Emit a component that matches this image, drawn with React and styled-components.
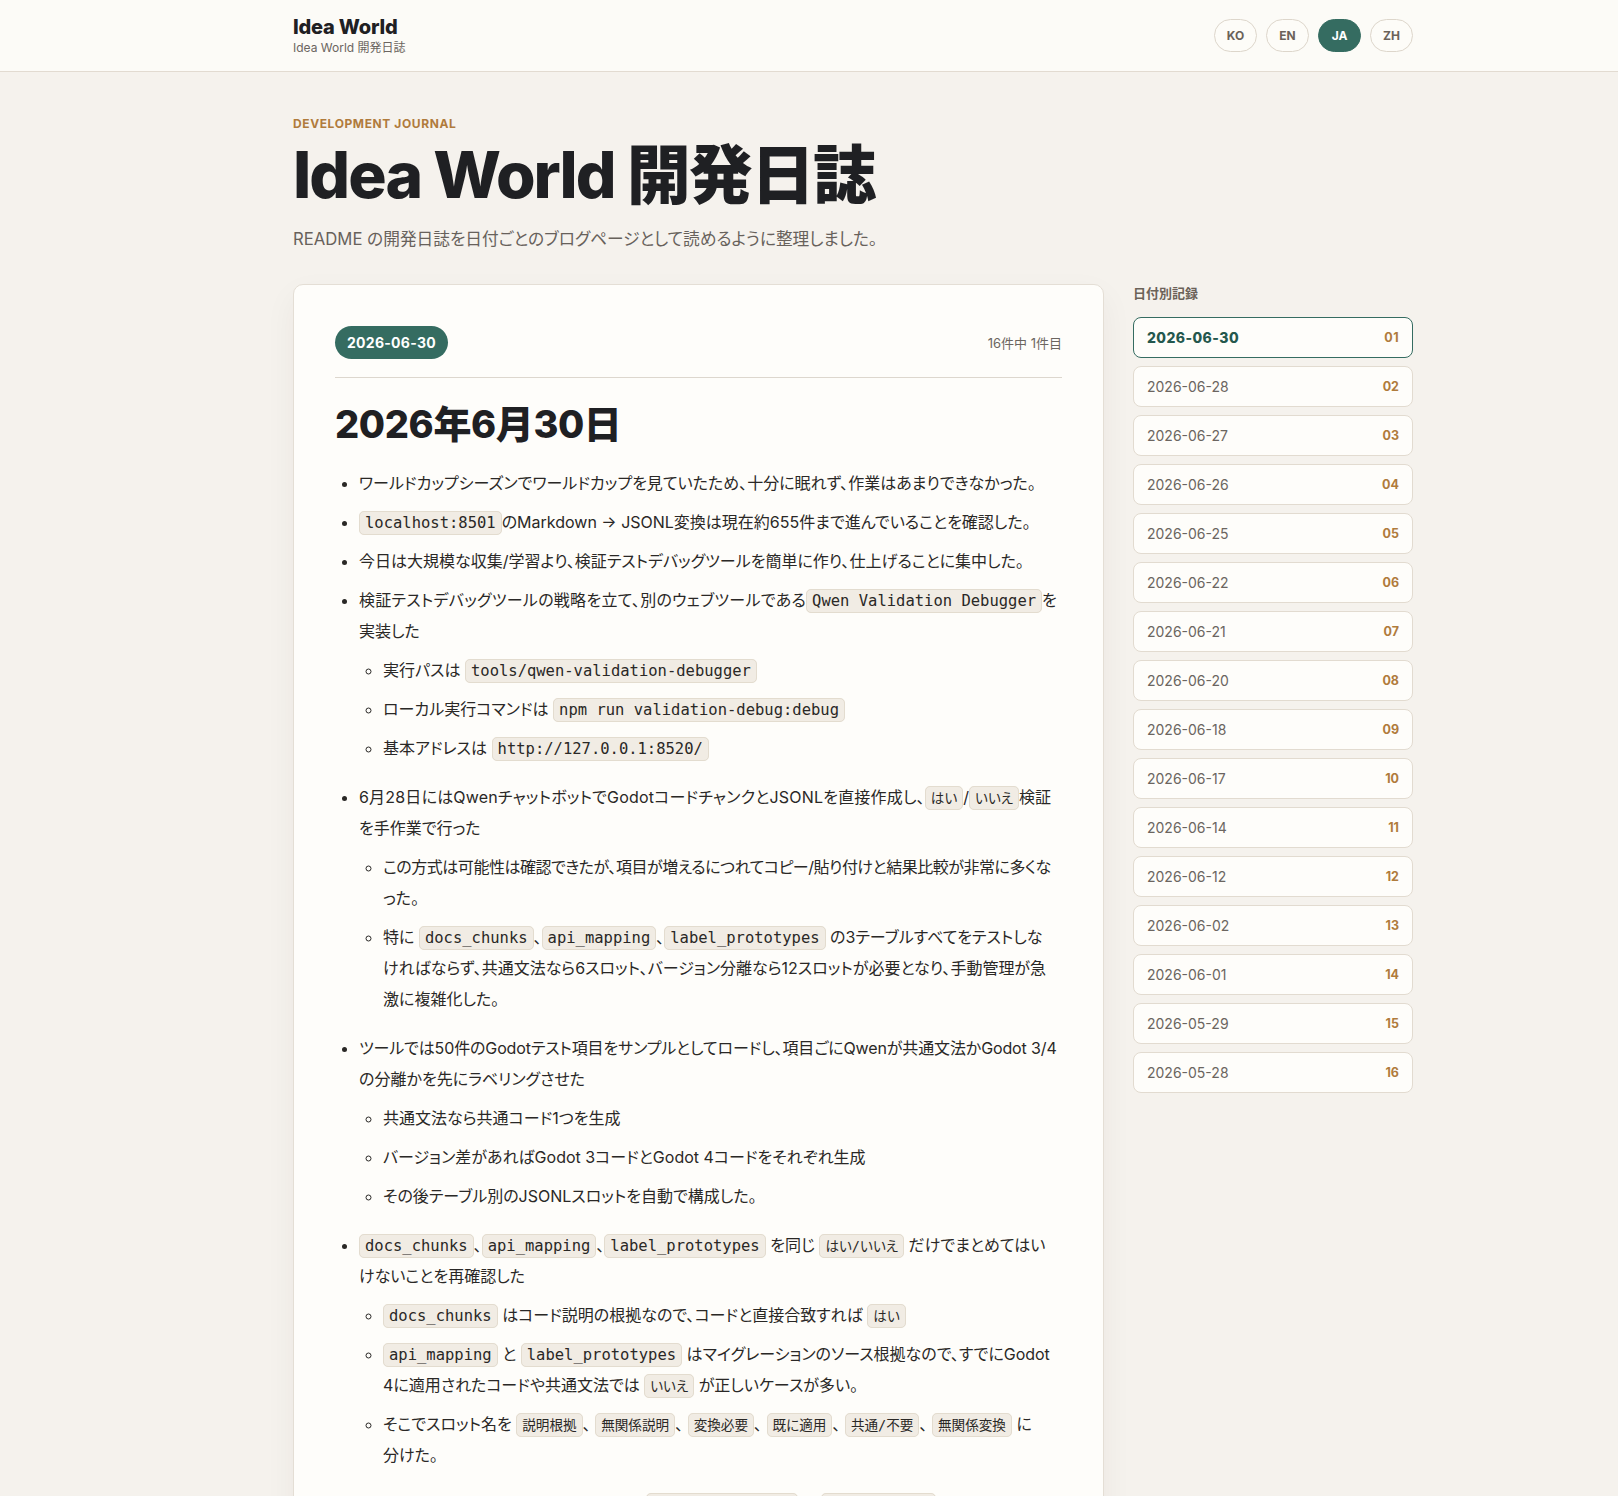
import React from "react";
import styled, { createGlobalStyle } from "styled-components";

const Global = createGlobalStyle`
  * { box-sizing: border-box; }
  html, body { margin: 0; padding: 0; }
  body {
    background: #f5f2ed;
    color: #2a2826;
    font-family: Inter, "Noto Sans CJK JP", sans-serif;
    font-feature-settings: "palt";
  }
`;

const Header = styled.header`
  background: #fcfbf7;
  border-bottom: 1px solid #e2dbd1;
  height: 72px;
`;

const Shell = styled.div`
  width: 1120px;
  margin-left: 293px;
`;

const HeaderInner = styled(Shell)`
  height: 100%;
  display: flex;
  align-items: center;
  justify-content: space-between;
`;

const Brand = styled.div`
  display: flex;
  flex-direction: column;
`;

const BrandTitle = styled.div`
  font-size: 20px;
  line-height: 24px;
  font-weight: 800;
  color: #1f2023;
  letter-spacing: -0.01em;
`;

const BrandSub = styled.div`
  font-size: 12px;
  line-height: 18px;
  color: #6b6560;
`;

const LangGroup = styled.nav`
  display: flex;
  gap: 9px;
`;

const LangPill = styled.button`
  width: 43px;
  height: 33px;
  border-radius: 999px;
  border: 1px solid ${(p) => (p.$active ? "#356c61" : "#ddd6cb")};
  background: ${(p) => (p.$active ? "#356c61" : "#fdfcf8")};
  color: ${(p) => (p.$active ? "#ffffff" : "#6b6259")};
  font-family: Inter, sans-serif;
  font-size: 12px;
  font-weight: 700;
  padding: 0;
  cursor: pointer;
`;

const Hero = styled(Shell)`
  padding-top: 44px;
`;

const Eyebrow = styled.div`
  font-size: 12px;
  line-height: 16px;
  font-weight: 700;
  letter-spacing: 0.05em;
  color: #b07b3c;
  text-transform: uppercase;
`;

const Title = styled.h1`
  margin: 8px 0 0;
  font-size: 64px;
  line-height: 70px;
  font-weight: 800;
  letter-spacing: -0.03em;
  color: #1f2023;
`;

const Lead = styled.p`
  margin: 16px 0 0;
  font-size: 16.7px;
  line-height: 27px;
  color: #67615b;
`;

const Layout = styled(Shell)`
  display: grid;
  grid-template-columns: 811px 280px;
  column-gap: 29px;
  align-items: start;
  margin-top: 31px;
`;

const Card = styled.article`
  background: #fefdfa;
  border: 1px solid #e4ded5;
  border-radius: 10px;
  box-shadow: 0 12px 32px rgba(60, 45, 30, 0.05);
  padding: 41px 41px 60px;
`;

const CardHead = styled.div`
  display: flex;
  align-items: center;
  justify-content: space-between;
  padding-bottom: 18px;
  border-bottom: 1px solid #ddd7ce;
`;

const DateBadge = styled.span`
  display: inline-flex;
  align-items: center;
  height: 33px;
  padding: 0 12px;
  border-radius: 999px;
  background: #356c61;
  color: #fff;
  font-size: 14px;
  font-weight: 700;
  letter-spacing: 0.02em;
`;

const Meta = styled.span`
  font-size: 13px;
  color: #6b6560;
`;

const DayTitle = styled.h2`
  margin: 23px 0 21px;
  font-size: 38px;
  line-height: 46px;
  font-weight: 800;
  letter-spacing: -0.01em;
  color: #1f2023;
`;

const List = styled.ul`
  margin: 0;
  padding-left: 24px;
  list-style: disc;
  font-size: 16px;
  line-height: 31px;
  color: #2a2826;
`;

const SubList = styled.ul`
  margin: 8px 0 18px;
  padding-left: 24px;
  list-style: circle;
`;

const Item = styled.li`
  margin: 0 0 8px;
  padding-left: 0;
`;

const Track = styled.span`
  letter-spacing: ${(p) => p.$ls || "0"};
`;

const Code = styled.code`
  font-family: "DejaVu Sans Mono", "Noto Sans CJK JP", monospace;
  font-size: ${(p) => (p.$ja ? "13.6px" : "15.5px")};
  line-height: 1;
  background: #f1ece4;
  border: 1px solid #e3dccf;
  border-radius: 5px;
  padding: ${(p) => (p.$ja ? "3px 5px" : "2px 5px")};
  color: #2a2826;
`;

const Sidebar = styled.aside`
  display: flex;
  flex-direction: column;
`;

const SideLabel = styled.div`
  font-size: 13px;
  line-height: 18px;
  font-weight: 700;
  color: #6b6259;
  margin-bottom: 15px;
`;

const DateList = styled.div`
  display: flex;
  flex-direction: column;
  gap: 8px;
`;

const DateLink = styled.a`
  display: flex;
  align-items: center;
  justify-content: space-between;
  height: 41px;
  padding: 0 13px;
  border-radius: 8px;
  background: #fefdfa;
  border: 1px solid ${(p) => (p.$active ? "#356c61" : "#e2dbd0")};
  color: ${(p) => (p.$active ? "#24574d" : "#6b6560")};
  font-size: 14px;
  font-weight: ${(p) => (p.$active ? 800 : 400)};
  letter-spacing: ${(p) => (p.$active ? "0.03em" : "0")};
  text-decoration: none;
`;

const DateNum = styled.span`
  font-size: 12.5px;
  font-weight: 700;
  color: #b07b3c;
`;

const dates = [
  "2026-06-30", "2026-06-28", "2026-06-27", "2026-06-26", "2026-06-25", "2026-06-22",
  "2026-06-21", "2026-06-20", "2026-06-18", "2026-06-17", "2026-06-14", "2026-06-12",
  "2026-06-02", "2026-06-01", "2026-05-29", "2026-05-28",
];

export default function App() {
  return (
    <>
      <Global />
      <Header>
        <HeaderInner>
          <Brand>
            <BrandTitle>Idea World</BrandTitle>
            <BrandSub>Idea World 開発日誌</BrandSub>
          </Brand>
          <LangGroup>
            {["KO", "EN", "JA", "ZH"].map((l) => (
              <LangPill key={l} $active={l === "JA"}>{l}</LangPill>
            ))}
          </LangGroup>
        </HeaderInner>
      </Header>

      <Hero>
        <Eyebrow>Development Journal</Eyebrow>
        <Title>Idea World 開発日誌</Title>
        <Lead>README の開発日誌を日付ごとのブログページとして読めるように整理しました。</Lead>
      </Hero>

      <Layout>
        <Card>
          <CardHead>
            <DateBadge>2026-06-30</DateBadge>
            <Meta>16件中 1件目</Meta>
          </CardHead>
          <DayTitle>2026年6月30日</DayTitle>
          <List>
            <Item>ワールドカップシーズンでワールドカップを見ていたため、十分に眠れず、作業はあまりできなかった。</Item>
            <Item><Code>localhost:8501</Code>のMarkdown → JSONL変換は現在約655件まで進んでいることを確認した。</Item>
            <Item>今日は大規模な収集/学習より、検証テストデバッグツールを簡単に作り、仕上げることに集中した。</Item>
            <Item>
              <Track $ls="0.017em">検証テストデバッグツールの戦略を立て、別のウェブツールである</Track><Code>Qwen Validation Debugger</Code>を<br />実装した
              <SubList>
                <Item>実行パスは <Code>tools/qwen-validation-debugger</Code></Item>
                <Item>ローカル実行コマンドは <Code>npm run validation-debug:debug</Code></Item>
                <Item>基本アドレスは <Code>http://127.0.0.1:8520/</Code></Item>
              </SubList>
            </Item>
            <Item>
              <Track $ls="0.012em">6月28日にはQwenチャットボットでGodotコードチャンクとJSONLを直接作成し、</Track><Code $ja>はい</Code>/<Code $ja>いいえ</Code>検証<br />を手作業で行った
              <SubList>
                <Item><Track $ls="-0.03em">この方式は可能性は確認できたが、項目が増えるにつれてコピー/貼り付けと結果比較が非常に多くな</Track><br />った。</Item>
                <Item>特に <Code>docs_chunks</Code>、<Code>api_mapping</Code>、<Code>label_prototypes</Code> の3テーブルすべてをテストしな<br />ければならず、共通文法なら6スロット、バージョン分離なら12スロットが必要となり、手動管理が急<br />激に複雑化した。</Item>
              </SubList>
            </Item>
            <Item>
              <Track $ls="-0.008em">ツールでは50件のGodotテスト項目をサンプルとしてロードし、項目ごにQwenが共通文法かGodot 3/4</Track><br />の分離かを先にラベリングさせた
              <SubList>
                <Item>共通文法なら共通コード1つを生成</Item>
                <Item>バージョン差があればGodot 3コードとGodot 4コードをそれぞれ生成</Item>
                <Item>その後テーブル別のJSONLスロットを自動で構成した。</Item>
              </SubList>
            </Item>
            <Item>
              <Code>docs_chunks</Code>、<Code>api_mapping</Code>、<Code>label_prototypes</Code> を同じ <Code $ja>はい/いいえ</Code> だけでまとめてはい<br />けないことを再確認した
              <SubList>
                <Item><Code>docs_chunks</Code> はコード説明の根拠なので、コードと直接合致すれば <Code $ja>はい</Code></Item>
                <Item><Code>api_mapping</Code> と <Code>label_prototypes</Code> はマイグレーションのソース根拠なので、すでにGodot<br />4に適用されたコードや共通文法では <Code $ja>いいえ</Code> が正しいケースが多い。</Item>
                <Item>そこでスロット名を <Code $ja>説明根拠</Code>、 <Code $ja>無関係説明</Code>、 <Code $ja>変換必要</Code>、 <Code $ja>既に適用</Code>、 <Code $ja>共通/不要</Code>、 <Code $ja>無関係変換</Code> に<br />分けた。</Item>
              </SubList>
            </Item>
            <Item>
              検証結果はテーブルごとに分けて、最後に <Code>validation_runs</Code> と <Code>report.json</Code> に保存するようにした。
            </Item>
          </List>
        </Card>

        <Sidebar>
          <SideLabel>日付別記録</SideLabel>
          <DateList>
            {dates.map((d, i) => (
              <DateLink key={d} href="#" $active={i === 0}>
                <span>{d}</span>
                <DateNum>{String(i + 1).padStart(2, "0")}</DateNum>
              </DateLink>
            ))}
          </DateList>
        </Sidebar>
      </Layout>
    </>
  );
}
